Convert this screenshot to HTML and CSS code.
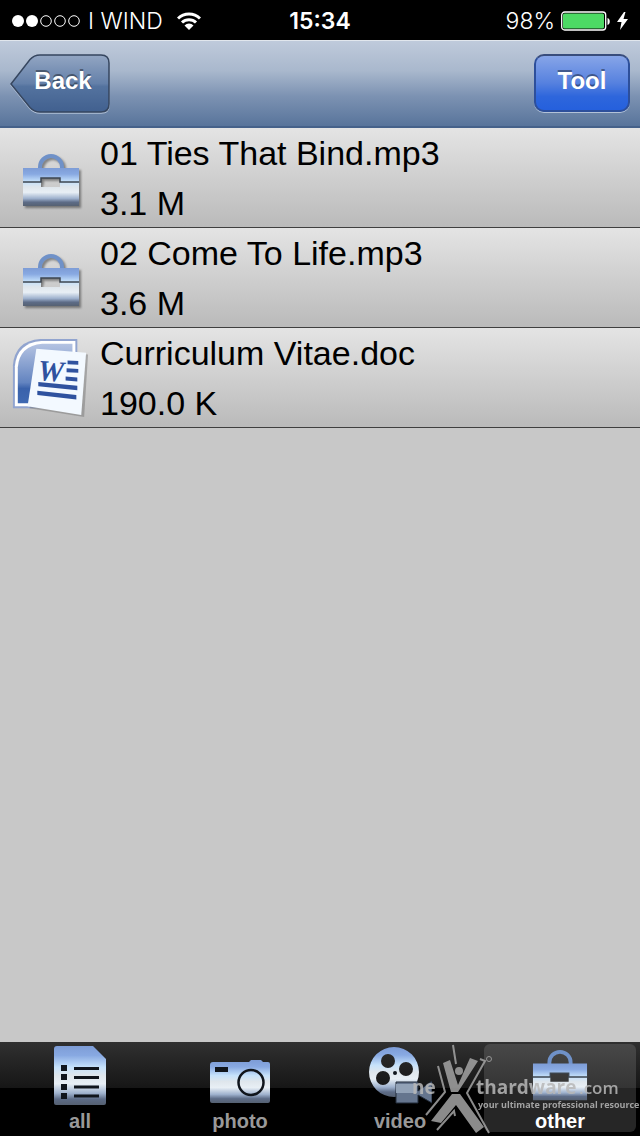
FILE: index.html
```html
<!DOCTYPE html>
<html lang="en">

<head>
    <meta charset="UTF-8">
    <meta name="viewport" content="width=device-width, initial-scale=1.0">
    <title>Files</title>
    <link rel="stylesheet" href="styles.css">
</head>

<body>
    <!-- Shared gradients and the toolbox symbol -->
    <svg class="defs" width="0" height="0" aria-hidden="true">
        <defs>
            <linearGradient id="chrome" x1="0" y1="0" x2="0" y2="1">
                <stop offset="0" stop-color="#7d9cd6" />
                <stop offset="0.16" stop-color="#88a9e2" />
                <stop offset="0.36" stop-color="#c6e2fb" />
                <stop offset="0.5" stop-color="#dfe6ec" />
                <stop offset="0.64" stop-color="#e8eff5" />
                <stop offset="0.8" stop-color="#9fb2ce" />
                <stop offset="0.9" stop-color="#5d6c87" />
                <stop offset="1" stop-color="#566172" />
            </linearGradient>
            <linearGradient id="wordBlue" x1="0" y1="0" x2="0" y2="1">
                <stop offset="0" stop-color="#b4c3e2" />
                <stop offset="0.65" stop-color="#6384c0" />
                <stop offset="0.75" stop-color="#3a62ab" />
                <stop offset="1" stop-color="#3f69b2" />
            </linearGradient>
            <linearGradient id="backFill" x1="0" y1="0" x2="0" y2="1">
                <stop offset="0" stop-color="#93a6c3" />
                <stop offset="0.5" stop-color="#6480a9" />
                <stop offset="0.55" stop-color="#54739f" />
                <stop offset="1" stop-color="#41608f" />
            </linearGradient>
            <symbol id="toolbox" viewBox="0 0 58 54">
                <path d="M18 17v-3a11 11 0 0 1 22 0v3" fill="none" stroke="#6f91c8" stroke-width="4" />
                <path fill="url(#chrome)" fill-rule="evenodd" d="M1 15h56v38H1zM19 25h19v9H19z" />
                <path d="M1 29h18v-4h19v4h19" fill="none" stroke="#3d4650" stroke-width="1.5" />
            </symbol>
        </defs>
    </svg>

    <header class="status-bar">
        <div class="carrier">
            <svg width="68" height="12" viewBox="0 0 68 12" role="img" aria-label="Signal">
                <g fill="#fff">
                    <circle cx="6" cy="6" r="6" />
                    <circle cx="20" cy="6" r="6" />
                </g>
                <g fill="none" stroke="#fff">
                    <circle cx="34" cy="6" r="5.3" />
                    <circle cx="48" cy="6" r="5.3" />
                    <circle cx="62" cy="6" r="5.3" />
                </g>
            </svg>
            <span>I WIND</span>
            <svg class="wifi" width="24" height="18" viewBox="0 0 24 18" role="img" aria-label="Wi-Fi">
                <g fill="none" stroke="#fff" stroke-width="3">
                    <path d="M1 6.5a15.5 15.5 0 0 1 22 0" />
                    <path d="M5 10.5a10 10 0 0 1 14 0" />
                </g>
                <path d="M12 18l-4.5-4.6a6.4 6.4 0 0 1 9 0z" fill="#fff" />
            </svg>
        </div>
        <span class="clock">15:34</span>
        <div class="power">
            <span>98%</span>
            <svg width="50" height="20" viewBox="0 0 50 20" role="img" aria-label="Battery">
                <rect x="0.7" y="1" width="44" height="18" rx="3" fill="none" stroke="#fff" stroke-width="1.3" />
                <rect x="2" y="2.5" width="41" height="15" rx="1.5" fill="#4cd964" />
                <path d="M46.5 7c3 .5 3 6.500 0 7z" fill="#fff" />
            </svg>
            <svg width="11" height="18" viewBox="0 0 11 18" role="img" aria-label="Charging">
                <path d="M7 0L0 10h4.500L3 18l8-11H6.500L8.500 0z" fill="#fff" />
            </svg>
        </div>
    </header>

    <nav class="nav-bar">
        <button class="nav-button back">
            <svg class="back-shape" width="102" height="60" viewBox="0 0 102 60" aria-hidden="true">
                <path d="M1 31L20 6.500Q24 2 30 2H91q8 0 8 8V51q0 8-8 8H30q-6 0-10-4.500z" fill="none" stroke="#b3c2d8" stroke-width="1.500" />
                <path d="M1 30L20 5.500Q24 1 30 1H91q8 0 8 8V50q0 8-8 8H30q-6 0-10-4.500z" fill="url(#backFill)" stroke="#36465f" stroke-width="1.500" />
            </svg>
            <span class="back-label">Back</span>
        </button>
        <button class="nav-button tool">Tool</button>
    </nav>

    <main>
        <ul class="file-list">
            <li class="file">
                <svg class="file-icon toolbox" width="58" height="54"><use href="#toolbox" /></svg>
                <div class="file-text">
                    <span>01 Ties That Bind.mp3</span>
                    <span>3.1 M</span>
                </div>
            </li>
            <li class="file">
                <svg class="file-icon toolbox" width="58" height="54"><use href="#toolbox" /></svg>
                <div class="file-text">
                    <span>02 Come To Life.mp3</span>
                    <span>3.6 M</span>
                </div>
            </li>
            <li class="file">
                <svg class="file-icon" width="78" height="80" viewBox="0 0 78 82">
                    <path d="M1 72V28Q3 3 29 1H67V72z" fill="#91a4cf" />
                    <path d="M3 70V29Q5 5 30 3H65V70z" fill="#fff" />
                    <path d="M6 67V30Q8 8 31 6H62V67z" fill="url(#wordBlue)" />
                    <path d="M27 13l51 4-4 64-56-9z" fill="#777" opacity="0.5" />
                    <path d="M25 11l51 4-5 64-55-9z" fill="#f3f9ff" />
                    <text x="26" y="43" class="word-letter" transform="rotate(4 26 43)">W</text>
                    <g fill="#2f529f">
                        <path d="M57 23l11 .500v4l-11-.500zM56 31l12 .700v4l-12-.700zM55 39.500l12 1v4l-12-1zM27 45l40 4v4.500l-40-4zM26 54l40 4.500v4.500l-40-4.500z" />
                    </g>
                </svg>
                <div class="file-text">
                    <span>Curriculum Vitae.doc</span>
                    <span>190.0 K</span>
                </div>
            </li>
        </ul>
    </main>

    <footer class="tab-bar">
        <button class="tab">
            <svg width="52" height="60" viewBox="0 0 52 60">
                <path d="M3 0H39L52 13V57q0 2-2 2H2q-2 0-2-2V3q0-3 3-3z" fill="url(#chrome)" />
                <path d="M7 19h6v6H7zM7 28h6v6H7zM7 38h6v6H7zM7 47h6v6H7z" fill="#10151c" />
                <path d="M20 22.500h25M20 31.500h25M20 41h25M20 50h25" stroke="#10151c" stroke-width="3" />
            </svg>
            <span>all</span>
        </button>
        <button class="tab">
            <svg width="60" height="60" viewBox="0 0 60 60">
                <path d="M3 16H39l2-2h10l2 2h5q2 0 2 2V55q0 2-2 2H2q-2 0-2-2V19q0-3 3-3z" fill="url(#chrome)" />
                <rect x="5" y="21" width="13" height="5" fill="#10151c" />
                <circle cx="41" cy="36.500" r="12.500" fill="none" stroke="#10151c" stroke-width="2.500" />
            </svg>
            <span>photo</span>
        </button>
        <button class="tab">
            <svg width="64" height="60" viewBox="0 0 64 60">
                <path fill="url(#chrome)" fill-rule="evenodd" d="M26 1a25 25 0 0 1 0 50a25 25 0 0 1 0-50zM20 8a7 7 0 0 0 0 14a7 7 0 0 0 0-14zM38 16a7 7 0 0 0 0 14a7 7 0 0 0 0-14zM15 25a7 7 0 0 0 0 14a7 7 0 0 0 0-14z" />
                <circle cx="27" cy="27" r="2" fill="#10151c" />
                <path d="M28 36h22v9l14-10v22l-14-8v8H28z" fill="#65758e" stroke="#222c3a" stroke-width="1" />
                <path d="M28 38h21v9H28z" fill="#92a2b7" />
            </svg>
            <span>video</span>
        </button>
        <button class="tab selected">
            <svg width="56" height="60" viewBox="0 0 58 60"><use href="#toolbox" width="58" height="54" y="2" /></svg>
            <span>other</span>
        </button>

        <svg class="watermark" width="230" height="96" viewBox="0 0 230 96">
            <g fill="#a4a4a4">
                <circle cx="49" cy="31" r="4" />
                <path d="M33 23l7-3 8 25L60 18l8 3-20 31h-7zM42 54h8l24 33-8 6-20-28-15 18-10-2z" />
            </g>
            <g fill="none" stroke="#a4a4a4" stroke-width="2">
                <path d="M43 5l3 19M28 26l7 26-19 23M70 19l5 2-18 32 22 40M27 90l17-19 1 5" />
                <circle cx="79" cy="19" r="2.500" stroke-width="1" />
            </g>
            <text class="mark-name" x="2" y="54">ne</text>
            <text class="mark-name" x="66" y="54">thardware</text>
            <text class="mark-com" x="169" y="54">.com</text>
            <text class="mark-tag" x="68" y="68">your ultimate professional resource</text>
        </svg>
    </footer>
</body>

</html>
```
FILE: styles.css
```css
* {
    box-sizing: border-box;
}

body {
    font-family: "Liberation Sans", Arial, sans-serif;
    background-color: #c8c8c8;
    color: #000;
    margin: 0;
    min-height: 100vh;
    display: flex;
    flex-direction: column;
}

button {
    font-family: inherit;
    border: none;
    padding: 0;
    cursor: pointer;
}

.defs {
    position: absolute;
}

.status-bar {
    height: 40px;
    padding: 0 12px;
    background-color: #000;
    color: #fff;
    font-family: Inter, "Liberation Sans", sans-serif;
    font-size: 23px;
    font-weight: 300;
    display: grid;
    grid-template-columns: 1fr auto 1fr;
    align-items: center;
}

.carrier,
.power {
    display: flex;
    align-items: center;
    gap: 8px;
}

.carrier {
    padding-top: 1px;
}

.power {
    justify-content: flex-end;
    gap: 6px;
    padding-top: 1px;
}

.wifi {
    margin-left: 6px;
}

.clock {
    font-weight: 600;
    padding-top: 1px;
}

.nav-bar {
    height: 88px;
    padding: 0 10px 2px;
    display: flex;
    align-items: center;
    justify-content: space-between;
    background: linear-gradient(#bfcadb, #a9b8cd 35%, #7c92b2 65%, #58749b);
    border-top: 1px solid #e1e6ed;
    border-bottom: 2px solid #45618a;
}

.nav-button {
    height: 58px;
    color: #fff;
    font-size: 24px;
    font-weight: bold;
    padding-bottom: 3px;
    text-shadow: 0 -2px 0 rgba(0, 0, 0, 0.4);
}

.back {
    position: relative;
    width: 100px;
    padding-left: 6px;
    background: none;
}

.back-shape {
    position: absolute;
    top: 0;
    left: 0;
}

.back-label {
    position: relative;
}

.tool {
    width: 96px;
    border: 2px solid #2d4f9b;
    border-top-color: #394d7c;
    border-radius: 10px;
    background: linear-gradient(#87a5e8, #5681df 50%, #2e66dc 75%, #2560dd);
    box-shadow: 0 1px 0 #b3c2d8;
}

main {
    flex: 1;
}

.file-list {
    list-style: none;
    margin: 0;
    padding: 0;
}

.file {
    height: 100px;
    display: grid;
    grid-template-columns: 100px 1fr;
    align-items: center;
    background: linear-gradient(#e4e4e4, #bababa);
    border-bottom: 1px solid #3f3f3f;
}

.file-icon {
    justify-self: center;
}

.toolbox {
    margin: 4px 0 0 2px;
    filter: drop-shadow(2px 2px 1px rgba(0, 0, 0, 0.4));
}

.file-text {
    display: flex;
    flex-direction: column;
    font-size: 34px;
    line-height: 50px;
}

.word-letter {
    font-family: "Liberation Serif", serif;
    font-size: 30px;
    font-style: italic;
    font-weight: bold;
    fill: #2f529f;
}

.tab-bar {
    position: relative;
    height: 94px;
    padding: 2px 0 4px;
    display: grid;
    grid-template-columns: repeat(4, 1fr);
    background: linear-gradient(#303030, #161616 49%, #000 49%);
}

.tab {
    display: flex;
    flex-direction: column;
    align-items: center;
    justify-content: flex-end;
    gap: 4px;
    margin: 0 4px;
    background: none;
    color: #999;
    font-size: 20px;
    font-weight: bold;
    line-height: 22px;
}

.tab.selected {
    border-radius: 6px;
    background: linear-gradient(#484848, #343434 50%, #262626 50%);
    color: #fff;
}

.watermark {
    position: absolute;
    right: 0;
    bottom: 0;
    opacity: 0.85;
    pointer-events: none;
}

.watermark text {
    font-family: "Open Sans", "Noto Sans", sans-serif;
    fill: #b8b8b8;
}

.watermark .mark-name {
    font-size: 19px;
    font-weight: bold;
}

.watermark .mark-com {
    font-size: 17px;
    font-weight: 600;
}

.watermark .mark-tag {
    font-size: 9px;
    font-weight: 700;
}
```
